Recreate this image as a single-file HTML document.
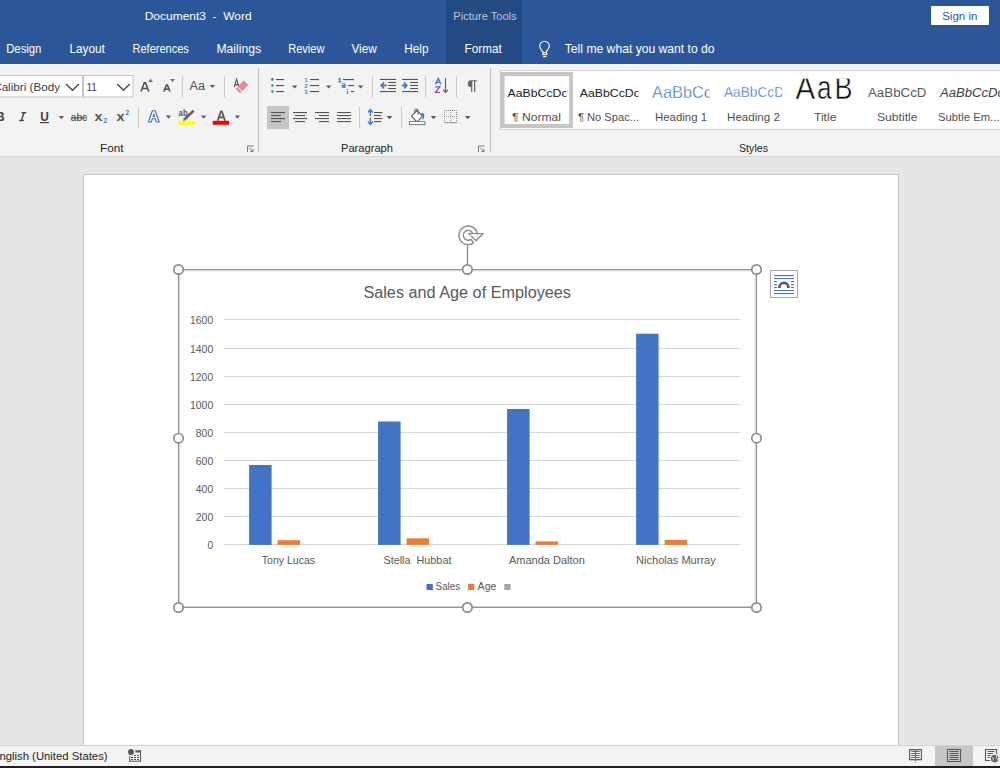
<!DOCTYPE html>
<html><head><meta charset="utf-8">
<style>
*{margin:0;padding:0;box-sizing:border-box}
html,body{width:1000px;height:768px;overflow:hidden;background:#e6e6e6;font-family:"Liberation Sans",sans-serif}
.a{position:absolute}
svg{position:absolute;left:0;top:0}
text{font-family:"Liberation Sans",sans-serif}
</style></head><body>
<!-- title bar -->
<div class="a" style="left:0;top:0;width:1000px;height:64px;background:#2b579a"></div>
<div class="a" style="left:446px;top:0;width:76px;height:64px;background:#234a83"></div>
<div class="a" style="left:931px;top:6px;width:58px;height:19px;background:#fff;border-radius:1px"></div>
<!-- ribbon -->
<div class="a" style="left:0;top:64px;width:1000px;height:92px;background:#f3f3f3"></div>
<div class="a" style="left:0;top:156px;width:1000px;height:1px;background:#d4d4d4"></div>
<!-- page -->
<div class="a" style="left:83px;top:174px;width:816px;height:571px;background:#fff;border:1px solid #c8c8c8;border-bottom:none"></div>
<!-- status -->
<div class="a" style="left:0;top:745px;width:1000px;height:21px;background:#f3f3f3;border-top:1px solid #d0d0d0"></div>
<div class="a" style="left:0;top:766px;width:1000px;height:2px;background:#1f1f1f"></div>

<svg width="1000" height="768" viewBox="0 0 1000 768">
<!-- title texts -->
<g fill="#fff">
<text x="144.7" y="19.6" font-size="11.7" textLength="107" lengthAdjust="spacingAndGlyphs" xml:space="preserve">Document3  -  Word</text>
<text x="6.2" y="53.2" font-size="12.2" textLength="35.2" lengthAdjust="spacingAndGlyphs">Design</text>
<text x="69.5" y="53.2" font-size="12.2" textLength="35.2" lengthAdjust="spacingAndGlyphs">Layout</text>
<text x="132.5" y="53.2" font-size="12.2" textLength="56.3" lengthAdjust="spacingAndGlyphs">References</text>
<text x="216.4" y="53.2" font-size="12.2" textLength="44.6" lengthAdjust="spacingAndGlyphs">Mailings</text>
<text x="288.2" y="53.2" font-size="12.2" textLength="36.3" lengthAdjust="spacingAndGlyphs">Review</text>
<text x="351.4" y="53.2" font-size="12.2" textLength="25.3" lengthAdjust="spacingAndGlyphs">View</text>
<text x="404.3" y="53.2" font-size="12.2" textLength="24.2" lengthAdjust="spacingAndGlyphs">Help</text>
<text x="464.6" y="53.2" font-size="12.2" textLength="37.2" lengthAdjust="spacingAndGlyphs">Format</text>
<text x="564.8" y="53.2" font-size="12.2" textLength="149.8" lengthAdjust="spacingAndGlyphs">Tell me what you want to do</text>
</g>
<text x="453.3" y="20" font-size="11.3" fill="#b8c6dc" textLength="63.3" lengthAdjust="spacingAndGlyphs">Picture Tools</text>
<text x="942.2" y="19.6" font-size="11.7" fill="#2b579a" textLength="35.2" lengthAdjust="spacingAndGlyphs">Sign in</text>
<!-- lightbulb -->
<g fill="none" stroke="#fff" stroke-width="1.15">
<path d="M542.9 52 C542.2 50.2 539.7 48.8 539.7 46 A4.8 4.8 0 0 1 549.3 46 C549.3 48.8 546.8 50.2 546.1 52"/>
<rect x="542.9" y="52.6" width="3.8" height="2"/>
</g>
<rect x="543.1" y="56.1" width="3.3" height="1.1" fill="#fff"/>

<!-- ===== RIBBON: FONT GROUP ===== -->
<rect x="-5" y="75.5" width="87.5" height="21.5" fill="#fff" stroke="#c6c6c6" stroke-width="1"/>
<rect x="83.5" y="75.5" width="49.5" height="21.5" fill="#fff" stroke="#c6c6c6" stroke-width="1"/>
<text x="-6.8" y="90.6" font-size="11.6" fill="#3c3c44" textLength="66.8" lengthAdjust="spacingAndGlyphs">Calibri (Body</text>
<text x="86.4" y="90.9" font-size="11.6" fill="#3c3c44" textLength="10.5" lengthAdjust="spacingAndGlyphs">11</text>
<g fill="none" stroke="#444" stroke-width="1.25">
<polyline points="66,84 72.5,90.3 79,84"/>
<polyline points="117.2,84 123.5,90.3 129.8,84"/>
</g>
<!-- grow/shrink -->
<g fill="none" stroke="#505050" stroke-width="1.55">
<path d="M141 91.6 L144.3 82.7 H145.5 L148.8 91.6 M142.4 88.5 H147.4"/>
<path d="M163.8 91.6 L166.4 84.9 H167.4 L170 91.6 M164.9 89.2 H168.9"/>
</g>
<path d="M148 82 L150.5 78.8 L153 82 Z" fill="#3d7abf"/>
<path d="M169.9 79 L175.1 79 L172.5 82.1 Z" fill="#3d7abf"/>
<g fill="#c9c9c9">
<rect x="182" y="76" width="1" height="21"/>
<rect x="224" y="76" width="1" height="21"/>
<rect x="138" y="107" width="1" height="21"/>
<rect x="258" y="68" width="1" height="84" fill="#bdbdbd"/>
<rect x="372" y="76" width="1" height="21"/>
<rect x="425" y="76" width="1" height="21"/>
<rect x="456" y="76" width="1" height="21"/>
<rect x="359" y="107" width="1" height="21"/>
<rect x="401" y="107" width="1" height="21"/>
<rect x="490" y="68" width="1" height="84" fill="#bdbdbd"/>
</g>
<!-- Aa -->
<text x="189.6" y="89.8" font-size="12" fill="#505050" textLength="15.4" lengthAdjust="spacingAndGlyphs">Aa</text>
<!-- eraser -->
<path d="M234.3 87 L236.6 79.2 L238.9 87 M235.2 84.6 H238" fill="none" stroke="#505050" stroke-width="1.1"/>
<path d="M248.30 85.02 L243.78 80.50 L237.70 86.58 L242.22 91.10 Z M241.66 91.67 L237.13 87.14 L235.58 88.70 L240.10 93.22 Z" fill="#e6879a"/>
<!-- dropdown triangles -->
<g fill="#5a5a5a">
<path d="M209.8 85 H215 L212.4 88 Z"/>
<path d="M58.8 116 H64 L61.4 119.2 Z"/>
<path d="M165.9 115.6 H171.1 L168.5 118.8 Z"/>
<path d="M201 115.6 H206.2 L203.6 118.8 Z"/>
<path d="M234.8 115.6 H240 L237.4 118.8 Z"/>
<path d="M292 85.5 H297.4 L294.7 88.6 Z"/>
<path d="M326 85.5 H331.4 L328.7 88.6 Z"/>
<path d="M358 85.5 H363.4 L360.7 88.6 Z"/>
<path d="M386.6 116 H392.4 L389.5 119.2 Z"/>
<path d="M430.8 116 H436.2 L433.5 119.2 Z"/>
<path d="M465 116 H470.4 L467.7 119.2 Z"/>
</g>
<!-- B I U abc x2 x2 -->
<text x="-4.2" y="120.8" font-size="12.4" font-weight="bold" fill="#444">B</text>
<path d="M21.6 112.7 H26.2 M19.2 120.4 H23.8 M23.9 112.7 L21.5 120.4" fill="none" stroke="#4a4a4a" stroke-width="1.5"/>
<text x="40.2" y="120.8" font-size="12.4" font-weight="bold" fill="#444" textLength="8.6" lengthAdjust="spacingAndGlyphs">U</text>
<rect x="40" y="122" width="9" height="1.2" fill="#444"/>
<text x="70.8" y="120.9" font-size="11" fill="#444" textLength="16.3" lengthAdjust="spacingAndGlyphs">abc</text>
<rect x="70.8" y="117.4" width="16.3" height="1" fill="#444"/>
<text x="94.6" y="121" font-size="12" font-weight="bold" fill="#555" textLength="8" lengthAdjust="spacingAndGlyphs">x</text>
<text x="103.6" y="123.2" font-size="6.5" font-weight="bold" fill="#3d7abf">2</text>
<text x="116.6" y="121" font-size="12" font-weight="bold" fill="#555" textLength="8" lengthAdjust="spacingAndGlyphs">x</text>
<text x="125.5" y="115.2" font-size="6.5" font-weight="bold" fill="#3d7abf">2</text>
<!-- text effects A -->
<path d="M148.4 122 L152.4 110.7 H155.2 L159.2 122 H156.4 L155.3 118.8 H152.3 L151.2 122 Z" fill="#fff" stroke="#3a74c0" stroke-width="1.1" stroke-linejoin="round"/><path d="M152.9 116.9 L153.8 113.6 L154.7 116.9 Z" fill="#3a74c0" stroke="#3a74c0" stroke-width="0.8" stroke-linejoin="round"/>
<!-- highlight -->
<text x="178.6" y="116.3" font-size="8.6" font-weight="bold" fill="#555" textLength="9" lengthAdjust="spacingAndGlyphs">ab</text>
<path d="M184 120 L193.6 110.6" stroke="#606060" stroke-width="2.6"/>
<path d="M183.2 121 L185 119.3" stroke="#888" stroke-width="1.2"/>
<rect x="178.7" y="120.8" width="16.3" height="4" fill="#ffff00"/>
<!-- font color -->
<path d="M217.7 120.8 L220.7 111.6 H222 L225 120.8 M218.9 117.4 H223.8" fill="none" stroke="#555" stroke-width="1.75"/>
<rect x="212.8" y="120.8" width="16.3" height="4" fill="#f00"/>
<!-- launcher -->
<g fill="none" stroke="#777" stroke-width="1">
<path d="M247.5 152 V146 H253.5"/>
<path d="M249.5 148 L253 151.5 M253 149 V151.5 H250.5"/>
<path d="M478.5 152 V146 H484.5"/>
<path d="M480.5 148 L484 151.5 M484 149 V151.5 H481.5"/>
</g>
<text x="100" y="152.2" font-size="11.2" fill="#262626" textLength="23.6" lengthAdjust="spacingAndGlyphs">Font</text>
<text x="341" y="152.2" font-size="11.2" fill="#262626" textLength="52" lengthAdjust="spacingAndGlyphs">Paragraph</text>
<text x="739" y="152.2" font-size="11.2" fill="#262626" textLength="29" lengthAdjust="spacingAndGlyphs">Styles</text>

<!-- ===== PARAGRAPH GROUP ===== -->
<!-- bullets -->
<g fill="#3d7abf">
<circle cx="272.4" cy="79.4" r="1.3"/>
<circle cx="272.4" cy="85.5" r="1.3"/>
<circle cx="272.4" cy="91.5" r="1.3"/>
</g>
<g fill="#505050">
<rect x="276" y="79" width="8" height="1.1"/>
<rect x="276" y="85" width="8" height="1.1"/>
<rect x="276" y="91" width="8" height="1.1"/>
<rect x="310" y="79" width="9" height="1.1"/>
<rect x="310" y="85" width="9" height="1.1"/>
<rect x="310" y="91" width="9" height="1.1"/>
<rect x="343" y="79" width="11" height="1.1"/>
<rect x="348" y="85" width="6" height="1.1"/>
<rect x="351" y="91" width="3" height="1.1"/>
</g>
<g font-size="5.4" font-weight="bold" fill="#3d7abf">
<text x="304.6" y="81.6">1</text>
<text x="304.6" y="87.7">2</text>
<text x="304.6" y="93.7">3</text>

</g>
<g fill="none" stroke="#3d7abf" stroke-width="1.15">
<path d="M338.4 79.4 L339.9 78.3 V82 M338.2 81.9 H341.4"/>
<path d="M342.1 83.7 H344.1 Q345 83.7 345 84.6 V87.1 H342.3 V85.6 H345"/>
<path d="M347.5 90.9 V94"/>
</g>
<circle cx="347.5" cy="89.4" r="0.65" fill="#3d7abf"/>
<!-- indent -->
<g fill="#555"><rect x="380" y="78.9" width="16" height="1.1"/><rect x="388.2" y="81.9" width="7.8" height="1.1"/><rect x="388.2" y="84.9" width="7.8" height="1.1"/><rect x="388.2" y="88" width="7.8" height="1.1"/><rect x="380" y="91" width="16" height="1.1"/><rect x="402" y="78.9" width="16" height="1.1"/><rect x="410.2" y="81.9" width="7.8" height="1.1"/><rect x="410.2" y="84.9" width="7.8" height="1.1"/><rect x="410.2" y="88" width="7.8" height="1.1"/><rect x="402" y="91" width="16" height="1.1"/></g>
<g fill="none" stroke="#3d7abf" stroke-width="1.6" stroke-linejoin="miter"><path d="M384 82.4 L381.2 85.4 L384 88.4 M381.4 85.4 H386.8"/><path d="M404 82.4 L406.8 85.4 L404 88.4 M406.6 85.4 H401.8"/></g>
<!-- sort -->
<path d="M435.4 84.6 L438.2 78.4 L441 84.6 M436.4 82.4 H440" fill="none" stroke="#3d7abf" stroke-width="1.3"/>
<path d="M435.2 86.8 H439.8 L435.4 92.4 H440.2" fill="none" stroke="#8a4ab4" stroke-width="1.2" stroke-linejoin="miter"/>
<path d="M445.5 78 V92.6 M443 89.6 L445.5 92.6 L448 89.6" fill="none" stroke="#606060" stroke-width="1.15"/>
<!-- pilcrow -->
<path d="M471 80.2 H477 V81.3 H475.2 V92 H474 V81.3 H472.3 V92 H471.1 V87.1 A3.3 3.45 0 0 1 471 80.2 Z" fill="#666"/>
<!-- align -->
<rect x="267" y="106" width="22" height="23" fill="#c5c5c5"/>
<g fill="#555">
<rect x="271" y="112" width="14" height="1.1"/>
<rect x="271" y="115" width="10" height="1.1"/>
<rect x="271" y="118" width="14" height="1.1"/>
<rect x="271" y="121" width="10" height="1.1"/>
<rect x="293" y="112" width="14" height="1.1"/>
<rect x="295" y="115" width="10" height="1.1"/>
<rect x="293" y="118" width="14" height="1.1"/>
<rect x="295" y="121" width="10" height="1.1"/>
<rect x="315" y="112" width="14" height="1.1"/>
<rect x="319" y="115" width="10" height="1.1"/>
<rect x="315" y="118" width="14" height="1.1"/>
<rect x="319" y="121" width="10" height="1.1"/>
<rect x="337" y="112" width="14" height="1.1"/>
<rect x="337" y="115" width="14" height="1.1"/>
<rect x="337" y="118" width="14" height="1.1"/>
<rect x="337" y="121" width="14" height="1.1"/>
<!-- line spacing lines -->
<rect x="374" y="112" width="8.4" height="1.1"/>
<rect x="374" y="115" width="7.2" height="1.1"/>
<rect x="374" y="118" width="8.4" height="1.1"/>
<rect x="374" y="121" width="7.2" height="1.1"/>
</g>
<path d="M370.4 109.6 V115.6 M368.3 112 L370.4 109.4 L372.5 112 M370.4 118.2 V124.4 M368.3 122 L370.4 124.6 L372.5 122" fill="none" stroke="#3d7abf" stroke-width="1.4" stroke-linecap="round" stroke-linejoin="round"/>
<!-- shading -->
<path d="M411.4 116.2 L417 110.6 L422.6 116.2 L417 121.8 Z" fill="#fff" stroke="#555" stroke-width="1.05" stroke-linejoin="round"/>
<path d="M414.8 112.4 V110.2 Q414.8 109.2 415.8 109.2 H417 Q418 109.2 418 110.2 V114.6" fill="none" stroke="#555" stroke-width="1"/>
<path d="M421.2 113.2 C424.2 112.6 425.6 115.6 422.6 120.4 C422.4 118.2 422.6 116.6 421.2 113.2 Z" fill="#3d7abf"/>
<rect x="409.5" y="121.6" width="15.4" height="3" fill="#fff" stroke="#777" stroke-width="1"/>
<!-- borders -->
<rect x="444" y="110" width="13" height="12" fill="#f6f1f6"/>
<g fill="#8f8f8f">
<rect x="444" y="110" width="1" height="1"/><rect x="446" y="110" width="1" height="1"/><rect x="448" y="110" width="1" height="1"/><rect x="450" y="110" width="1" height="1"/><rect x="452" y="110" width="1" height="1"/><rect x="454" y="110" width="1" height="1"/><rect x="456" y="110" width="1" height="1"/>
<rect x="444" y="116" width="1" height="1"/><rect x="446" y="116" width="1" height="1"/><rect x="448" y="116" width="1" height="1"/><rect x="450" y="116" width="1" height="1"/><rect x="452" y="116" width="1" height="1"/><rect x="454" y="116" width="1" height="1"/><rect x="456" y="116" width="1" height="1"/>
<rect x="444" y="112" width="1" height="1"/><rect x="444" y="114" width="1" height="1"/><rect x="444" y="118" width="1" height="1"/><rect x="444" y="120" width="1" height="1"/>
<rect x="450" y="112" width="1" height="1"/><rect x="450" y="114" width="1" height="1"/><rect x="450" y="118" width="1" height="1"/><rect x="450" y="120" width="1" height="1"/>
<rect x="456" y="112" width="1" height="1"/><rect x="456" y="114" width="1" height="1"/><rect x="456" y="118" width="1" height="1"/><rect x="456" y="120" width="1" height="1"/>
</g>
<rect x="444" y="122" width="13.4" height="1.1" fill="#9a9a9a"/>

<!-- ===== STYLES GALLERY ===== -->
<rect x="500" y="70" width="500" height="60" fill="#d0d0d0"/><rect x="501" y="71" width="499" height="58" fill="#fff"/>
<rect x="500" y="72" width="73" height="56" fill="#c6c6c6"/><rect x="504.6" y="76" width="64.6" height="48" fill="#fff"/>
<svg x="505" y="80" width="61.4" height="20" viewBox="505 80 61.4 20" overflow="hidden"><text x="507.6" y="96.6" font-size="11.8" fill="#1a1a1a" textLength="60" lengthAdjust="spacingAndGlyphs">AaBbCcDc</text></svg>
<text x="512" y="121" font-size="11.2" fill="#505050" textLength="49" lengthAdjust="spacingAndGlyphs">¶ Normal</text>
<svg x="575" y="80" width="63.4" height="20" viewBox="575 80 63.4 20" overflow="hidden"><text x="579.8" y="96.6" font-size="11.8" fill="#1a1a1a" textLength="60" lengthAdjust="spacingAndGlyphs">AaBbCcDc</text></svg>
<text x="578" y="121" font-size="11.2" fill="#505050" textLength="61" lengthAdjust="spacingAndGlyphs">¶ No Spac...</text>
<svg x="645" y="75" width="64.8" height="30" viewBox="645 75 64.8 30" overflow="hidden"><text x="652" y="98.4" font-size="16.6" fill="#3a73c0" stroke="#fff" stroke-width="0.35" textLength="60" lengthAdjust="spacingAndGlyphs">AaBbCc</text></svg>
<text x="655" y="121" font-size="11.2" fill="#505050" textLength="52" lengthAdjust="spacingAndGlyphs">Heading 1</text>
<svg x="715" y="75" width="67.2" height="30" viewBox="715 75 67.2 30" overflow="hidden"><text x="724" y="97" font-size="14.6" fill="#3a73c0" stroke="#fff" stroke-width="0.3" textLength="60" lengthAdjust="spacingAndGlyphs">AaBbCcD</text></svg>
<text x="727" y="121" font-size="11.2" fill="#505050" textLength="53" lengthAdjust="spacingAndGlyphs">Heading 2</text>
<svg x="790" y="78.75" width="70" height="30" viewBox="790 78.75 70 30" overflow="hidden">
<g font-size="33" fill="#111" stroke="#fff" stroke-width="0.5">
<text x="795.6" y="98.7" textLength="19.6" lengthAdjust="spacingAndGlyphs">A</text>
<text x="817" y="98.7" textLength="14.6" lengthAdjust="spacingAndGlyphs">a</text>
<text x="834.6" y="98.7" textLength="18" lengthAdjust="spacingAndGlyphs">B</text>
</g>
</svg>
<text x="814" y="121" font-size="11.2" fill="#505050" textLength="22.4" lengthAdjust="spacingAndGlyphs">Title</text>
<text x="868" y="97.2" font-size="12" fill="#5a5a5a" textLength="58.4" lengthAdjust="spacingAndGlyphs">AaBbCcD</text>
<text x="877" y="121" font-size="11.2" fill="#505050" textLength="40.5" lengthAdjust="spacingAndGlyphs">Subtitle</text>
<svg x="930" y="80" width="70" height="30" viewBox="930 80 70 30" overflow="hidden">
<text x="940" y="97.2" font-size="12" font-style="italic" fill="#404040" textLength="64" lengthAdjust="spacingAndGlyphs">AaBbCcDc</text>
</svg>
<text x="938" y="121" font-size="11.2" fill="#505050" textLength="61.5" lengthAdjust="spacingAndGlyphs">Subtle Em...</text>
<!-- ===== CHART ===== -->
<g>
<rect x="179" y="270" width="577" height="1" fill="#d9d9d9"/><rect x="179" y="606" width="577" height="1" fill="#d9d9d9"/>
<rect x="179" y="270" width="1" height="337" fill="#d9d9d9"/><rect x="755" y="270" width="1" height="337" fill="#d9d9d9"/>
<rect x="180" y="271" width="575" height="1" fill="#f3f3f3"/><rect x="180" y="605" width="575" height="1" fill="#f3f3f3"/>
<rect x="180" y="271" width="1" height="335" fill="#f3f3f3"/><rect x="754" y="271" width="1" height="335" fill="#f3f3f3"/>
<rect x="178" y="269" width="579" height="1" fill="#8f8f8f"/><rect x="178" y="607" width="579" height="1" fill="#8f8f8f"/>
<rect x="178" y="269" width="1" height="339" fill="#8f8f8f"/><rect x="756" y="269" width="1" height="339" fill="#8f8f8f"/>
</g>

<g fill="#d9d9d9">
<rect x="224" y="319" width="516.5" height="1"/>
<rect x="224" y="348" width="516.5" height="1"/>
<rect x="224" y="376" width="516.5" height="1"/>
<rect x="224" y="404" width="516.5" height="1"/>
<rect x="224" y="432" width="516.5" height="1"/>
<rect x="224" y="460" width="516.5" height="1"/>
<rect x="224" y="488" width="516.5" height="1"/>
<rect x="224" y="516" width="516.5" height="1"/>
<rect x="224" y="544" width="516.5" height="1"/>
</g>
<g font-size="11.2" fill="#595959" text-anchor="end">
<text x="213.2" y="323.6" textLength="23.2" lengthAdjust="spacingAndGlyphs">1600</text>
<text x="213.2" y="352.6" textLength="23.2" lengthAdjust="spacingAndGlyphs">1400</text>
<text x="213.2" y="380.6" textLength="23.2" lengthAdjust="spacingAndGlyphs">1200</text>
<text x="213.2" y="408.6" textLength="23.2" lengthAdjust="spacingAndGlyphs">1000</text>
<text x="213.2" y="436.6" textLength="17.4" lengthAdjust="spacingAndGlyphs">800</text>
<text x="213.2" y="464.6" textLength="17.4" lengthAdjust="spacingAndGlyphs">600</text>
<text x="213.2" y="492.6" textLength="17.4" lengthAdjust="spacingAndGlyphs">400</text>
<text x="213.2" y="520.6" textLength="17.4" lengthAdjust="spacingAndGlyphs">200</text>
<text x="213.2" y="548.6" textLength="5.8" lengthAdjust="spacingAndGlyphs">0</text>
</g>
<g fill="#4472c4">
<rect x="249.1" y="465" width="22.5" height="79.90"/>
<rect x="378.1" y="421.5" width="22.5" height="123.40"/>
<rect x="507.1" y="409" width="22.5" height="135.90"/>
<rect x="636.1" y="333.75" width="22.5" height="211.15"/>
</g><g fill="#ed7d31">
<rect x="277.6" y="540.2" width="22.5" height="4.70"/>
<rect x="406.6" y="538.3" width="22.5" height="6.60"/>
<rect x="535.6" y="541.4" width="22.5" height="3.50"/>
<rect x="664.6" y="540" width="22.5" height="4.90"/>
</g>
<text x="363.4" y="298.3" font-size="15.6" fill="#595959" textLength="207.6" lengthAdjust="spacingAndGlyphs">Sales and Age of Employees</text>
<g font-size="11.2" fill="#595959">
<text x="261.8" y="564.3" textLength="53.2" lengthAdjust="spacingAndGlyphs" xml:space="preserve">Tony Lucas</text>
<text x="383.5" y="564.3" textLength="67.9" lengthAdjust="spacingAndGlyphs" xml:space="preserve">Stella  Hubbat</text>
<text x="508.9" y="564.3" textLength="75.9" lengthAdjust="spacingAndGlyphs" xml:space="preserve">Amanda Dalton</text>
<text x="636.1" y="564.3" textLength="79.6" lengthAdjust="spacingAndGlyphs" xml:space="preserve">Nicholas Murray</text>
</g>
<rect x="426.5" y="584" width="6.3" height="6" fill="#4472c4"/>
<rect x="468" y="584" width="6.3" height="6" fill="#ed7d31"/>
<rect x="504.3" y="584" width="6.3" height="6" fill="#a5a5a5"/>
<g font-size="11.2" fill="#595959">
<text x="435.6" y="590.4" textLength="24.6" lengthAdjust="spacingAndGlyphs">Sales</text>
<text x="477.6" y="590.4" textLength="18.8" lengthAdjust="spacingAndGlyphs">Age</text>
</g>
<g fill="none" stroke="#8c8c8c" stroke-width="1.3">

<line x1="467.5" y1="245" x2="467.5" y2="265"/>
</g>
<g fill="#fff" stroke="#8c8c8c" stroke-width="1.7">
<circle cx="178.5" cy="269.5" r="4.7"/>
<circle cx="467.4" cy="269.5" r="4.7"/>
<circle cx="756.5" cy="269.5" r="4.7"/>
<circle cx="178.5" cy="438.2" r="4.7"/>
<circle cx="756.5" cy="438.2" r="4.7"/>
<circle cx="178.5" cy="607.5" r="4.7"/>
<circle cx="467.4" cy="607.5" r="4.7"/>
<circle cx="756.5" cy="607.5" r="4.7"/>
</g>
<path d="M473.53 242.92 A9.3 9.3 0 1 1 477.50 235.30 L473.10 235.30 A4.9 4.9 0 1 0 471.01 239.31 Z" fill="#fff" stroke="#8c8c8c" stroke-width="1.4" stroke-linejoin="round"/>
<path d="M468.8 233.6 L483.2 233.6 L475.9 240.8 Z" fill="#fff" stroke="#8c8c8c" stroke-width="1.4" stroke-linejoin="round"/>
<rect x="470.4" y="234.4" width="5" height="1.2" fill="#fff"/>
<rect x="770.5" y="270.5" width="27" height="27" fill="#fff" stroke="#a8a8a8" stroke-width="1"/>
<g fill="#4a7ab8"><rect x="774" y="275" width="20" height="1.1"/><rect x="774" y="278" width="20" height="1.1"/><rect x="774" y="281" width="3" height="1.1"/><rect x="791" y="281" width="3" height="1.1"/><rect x="774" y="284" width="3" height="1.1"/><rect x="791" y="284" width="3" height="1.1"/><rect x="774" y="287" width="3" height="1.1"/><rect x="791" y="287" width="3" height="1.1"/><rect x="774" y="290" width="20" height="1.1"/><rect x="774" y="293" width="20" height="1.1"/></g>
<path d="M779.4 288 V287.4 A4.5 4.5 0 0 1 788.4 287.4 V288" fill="none" stroke="#5f5f5f" stroke-width="2.8"/>

<!-- ===== STATUS BAR ===== -->
<text x="-0.6" y="759.9" font-size="11.2" fill="#262626" textLength="108.2" lengthAdjust="spacingAndGlyphs">nglish (United States)</text>
<g fill="#555">
<circle cx="131" cy="752" r="2.9"/>
<rect x="135.3" y="750.3" width="5.6" height="2.2"/>
<rect x="140" y="750.3" width="1" height="11.4"/>
<rect x="129.2" y="760.7" width="11.7" height="1"/>
<rect x="129.2" y="756.2" width="1" height="5.5"/>
<rect x="134" y="755" width="2" height="1"/><rect x="137" y="755" width="2" height="1"/>
<rect x="131" y="757" width="2" height="1"/><rect x="134" y="757" width="2" height="1"/><rect x="137" y="757" width="2" height="1"/>
<rect x="131" y="759" width="2" height="1"/><rect x="134" y="759" width="2" height="1"/><rect x="137" y="759" width="2" height="1"/>
</g>
<rect x="935" y="746" width="38" height="20" fill="#c6c6c6"/>
<g fill="none" stroke="#5a5a5a" stroke-width="1.1">
<path d="M909.6 749.6 H914.5 L915.5 750.5 L916.5 749.6 H921.4 V759.6 H916.5 L915.5 760.5 L914.5 759.6 H909.6 Z"/>
<path d="M911.2 751.5 H919.8 M911.2 753.5 H919.8 M911.2 755.5 H919.8 M911.2 757.5 H919.8" stroke-width="0.9"/>
<path d="M915.5 750 V762.5" stroke-width="0.9" stroke-dasharray="1 1"/>
<rect x="947.5" y="749.5" width="13" height="12"/>
<path d="M949.5 751.5 H958.5 M949.5 753.5 H958.5 M949.5 755.5 H958.5 M949.5 757.5 H958.5 M949.5 759.5 H958.5" stroke-width="1"/>
<path d="M996.5 754 V749.5 H985.5 V760.5 H990"/>
<path d="M987.5 751.5 H994.5 M987.5 753.5 H993 M987.5 755.5 H991 M987.5 757.5 H990" stroke-width="1"/>
</g>
<circle cx="994.6" cy="758.6" r="4.4" fill="#606060" stroke="#f3f3f3" stroke-width="1.2"/>
<path d="M991.5 756.5 Q994 757.5 993.4 760.5 M996.2 755.4 Q996 758.4 998 760" fill="none" stroke="#e0e0e0" stroke-width="1"/>
</svg>
</body></html>
